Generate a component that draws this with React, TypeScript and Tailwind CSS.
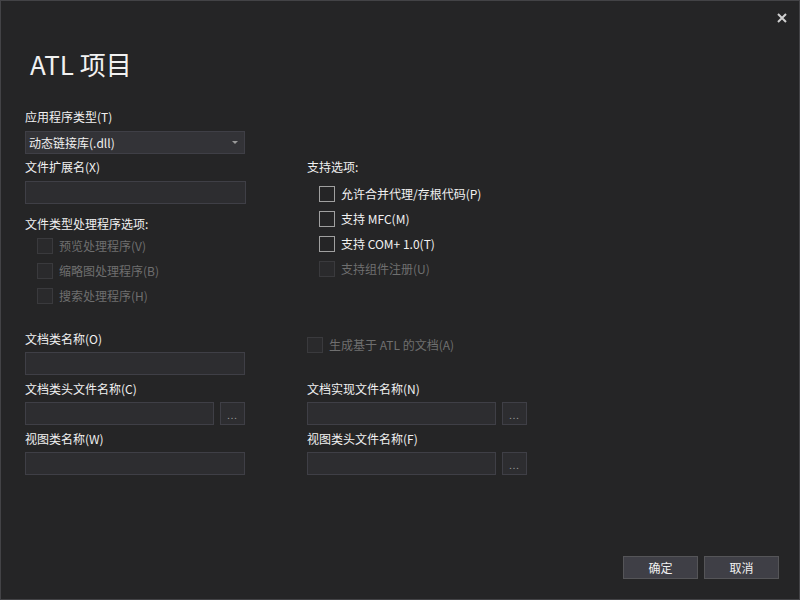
import type { ReactNode } from 'react'

const font = "font-['Noto_Sans_CJK_SC','Noto_Sans',sans-serif]"

function Label({ children, muted }: { children: ReactNode; muted?: boolean }) {
  return (
    <div className={`h-[16px] text-[12px] leading-[12px] ${muted ? 'text-[#6f6f6f]' : 'text-[#f1f1f1]'}`}>
      {children}
    </div>
  )
}

function TextBox({ width }: { width: string }) {
  return <div className={`${width} h-[23px] border border-[#3f3f46] bg-[#2d2d30]`} />
}

function BrowseButton() {
  return (
    <div className="w-[25px] h-[23px] border border-[#3f3f46] bg-[#2d2d30] flex items-end justify-center pb-[3px]">
      <span className="text-[9px] leading-[10px] text-[#9a9a9a] tracking-[1px]">...</span>
    </div>
  )
}

function Field({ label, browse }: { label: string; browse?: boolean }) {
  return (
    <div className="flex flex-col gap-[3px]">
      <Label>{label}</Label>
      {browse ? (
        <div className="flex gap-[6px]">
          <TextBox width="w-[189px]" />
          <BrowseButton />
        </div>
      ) : (
        <TextBox width="w-[220px]" />
      )}
    </div>
  )
}

function CheckBox({ label, disabled }: { label: string; disabled?: boolean }) {
  return (
    <div className="flex items-center gap-[6px] h-[16px]">
      <div
        className={`w-[16px] h-[16px] border ${
          disabled ? 'border-[#3a3a3d] bg-[#2a2a2c]' : 'border-[#a0a0a0] bg-[#252526]'
        }`}
      />
      <span className={`text-[12px] leading-[16px] ${disabled ? 'text-[#6f6f6f]' : 'text-[#f1f1f1]'}`}>
        {label}
      </span>
    </div>
  )
}

function DialogButton({ children }: { children: ReactNode }) {
  return (
    <div className="w-[75px] h-[23px] border border-[#555558] bg-[#3f3f46] flex items-center justify-center text-[12px] text-[#f1f1f1]">
      {children}
    </div>
  )
}

export default function App() {
  return (
    <div className={`${font} w-[800px] h-[600px] bg-[#252526] border border-[#434346] flex flex-col relative`}>
      {/* close */}
      <div className="absolute right-[11px] top-[11px] w-[12px] h-[12px]">
        <svg viewBox="0 0 12 12" className="w-[12px] h-[12px]">
          <path d="M2 2L10 10M10 2L2 10" stroke="#d0d0d0" strokeWidth="2" />
        </svg>
      </div>

      <div className="pl-[29px] pt-[45px] text-[26px] leading-[36px] text-[#f1f1f1]">ATL 项目</div>

      <div className="pl-[24px] pt-[29px] flex flex-col">
        {/* application type */}
        <div className="flex flex-col gap-[4px]">
          <Label>应用程序类型(T)</Label>
          <div className="w-[220px] h-[23px] border border-[#3f3f46] bg-[#333337] flex items-center justify-between pl-[3px] pr-[6px]">
            <span className="text-[12px] text-[#f1f1f1]">动态链接库(.dll)</span>
            <svg viewBox="0 0 6 3" className="w-[6px] h-[3px]">
              <path d="M0 0H6L3 3Z" fill="#9a9a9a" />
            </svg>
          </div>
        </div>

        <div className="flex gap-[62px] mt-[7px]">
          <div className="flex flex-col w-[220px]">
            <div className="flex flex-col gap-[4px]">
              <Label>文件扩展名(X)</Label>
              <TextBox width="w-[221px]" />
            </div>
            <div className="mt-[14px]">
              <Label>文件类型处理程序选项:</Label>
            </div>
            <div className="flex flex-col gap-[9px] mt-[4px] pl-[12px]">
              <CheckBox label="预览处理程序(V)" disabled />
              <CheckBox label="缩略图处理程序(B)" disabled />
              <CheckBox label="搜索处理程序(H)" disabled />
            </div>
          </div>
          <div className="flex flex-col">
            <Label>支持选项:</Label>
            <div className="flex flex-col gap-[9px] mt-[9px] pl-[12px]">
              <CheckBox label="允许合并代理/存根代码(P)" />
              <CheckBox label="支持 MFC(M)" />
              <CheckBox label="支持 COM+ 1.0(T)" />
              <CheckBox label="支持组件注册(U)" disabled />
            </div>
          </div>
        </div>

        <div className="grid grid-cols-[220px_auto] gap-x-[62px] gap-y-[8px] mt-[29px] w-fit">
          <Field label="文档类名称(O)" />
          <div className="pt-[4px]">
            <CheckBox label="生成基于 ATL 的文档(A)" disabled />
          </div>
          <Field label="文档类头文件名称(C)" browse />
          <Field label="文档实现文件名称(N)" browse />
          <Field label="视图类名称(W)" />
          <Field label="视图类头文件名称(F)" browse />
        </div>
      </div>

      <div className="mt-auto flex justify-end gap-[6px] pr-[20px] pb-[20px]">
        <DialogButton>确定</DialogButton>
        <DialogButton>取消</DialogButton>
      </div>
    </div>
  )
}
